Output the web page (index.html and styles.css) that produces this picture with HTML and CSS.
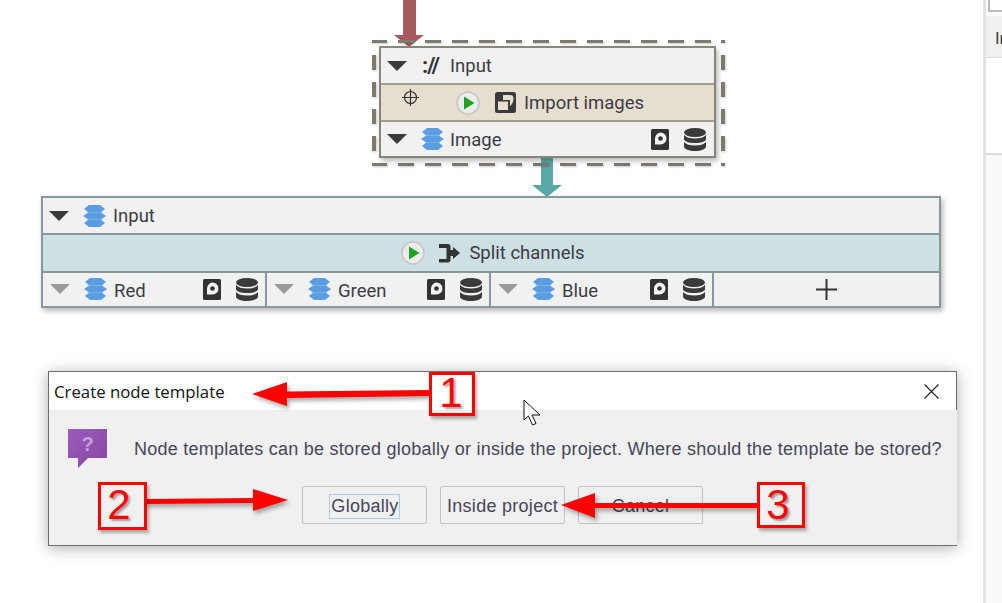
FILE: index.html
```html
<!DOCTYPE html>
<html lang="en">
<head>
<meta charset="utf-8">
<title>Create node template</title>
<link rel="stylesheet" href="styles.css">
</head>
<body>
<svg class="defs" width="0" height="0" aria-hidden="true">
  <linearGradient id="qfill" x1="0" y1="0" x2="1" y2="1"><stop offset="0" stop-color="#9b5cbd"/><stop offset="1" stop-color="#85479f"/></linearGradient>
  <symbol id="tri" viewBox="0 0 20 10"><path d="M0 0H20L10 10Z"/></symbol>
  <symbol id="layers" viewBox="0 0 23 22">
    <path fill="#5a9de0" d="M6 14H17L22 18 17 22H6L1 18Z"/>
    <path fill="#5a9de0" d="M6 7H17L23 11 17 15H6L0 11Z"/>
    <path fill="#5a9de0" d="M6 0H17L22 4 17 8H6L1 4Z"/>
    <path d="M4 7.500H19M4 14.500H19" stroke="#8dbdec" stroke-width=".6"/>
  </symbol>
  <symbol id="disk" viewBox="0 0 18 21">
    <rect width="18" height="21" rx="1.500" fill="#333"/>
    <path d="M9.500 3.500a6 6 0 1 1 0 12H4V9.500a6 6 0 0 1 5.500-6Z" fill="#f2f2f2"/>
    <circle cx="9.500" cy="9.500" r="2.300" fill="#333"/>
  </symbol>
  <symbol id="db" viewBox="0 0 22 23">
    <ellipse cx="11" cy="4.500" rx="11" ry="4.500" fill="#3a3a3a"/>
    <path fill="#3a3a3a" d="M0 7c2 2.500 6 3.500 11 3.500S20 9.500 22 7v4c0 2.500-5 4-11 4S0 13.500 0 11Z"/>
    <path fill="#3a3a3a" d="M0 14c2 2.500 6 3.500 11 3.500s9-1 11-3.500v4.500c0 2.500-5 4.500-11 4.500S0 21 0 18.500Z"/>
  </symbol>
  <symbol id="play" viewBox="0 0 24 24">
    <circle cx="12" cy="12" r="11" fill="#ececec" stroke="#c4c4c4" stroke-width="1.500"/>
    <path d="M8 5.500 18.500 12 8 18.500Z" fill="#1fa31f"/>
  </symbol>
  <symbol id="import" viewBox="0 0 21 21">
    <rect width="21" height="21" rx="2.500" fill="#3a3a3a"/>
    <path fill="#e6dfd0" d="M8 3h7c2.500 0 3.500 1 3.500 3.500 0 3.500-1.500 6-3.500 7.500V8H8Z"/>
    <rect x="3" y="9.500" width="10" height="8.500" fill="#e6dfd0"/>
  </symbol>
  <symbol id="split" viewBox="0 0 21 19">
    <path fill="#333" d="M0 0h9c1.500 0 2.500 1 2.500 2.500V6H14V3L21 9l-7 6v-3h-2.500v4c0 1.500-1 2.500-2.500 2.500H0V15h7.500V4H0Z"/>
  </symbol>
  <symbol id="target" viewBox="0 0 17 17">
    <circle cx="8.500" cy="8.500" r="6" fill="none" stroke="#333" stroke-width="1.200"/>
    <path d="M8.500 0v17M0 8.500h17" stroke="#333" stroke-width="1.200"/>
  </symbol>
</svg>

<main class="canvas">
  <div class="flow flow-in"></div>
  <div class="flow flow-out"></div>

  <div class="selection"></div>

  <section class="node node-import">
    <div class="row row-head">
      <svg class="tri"><use href="#tri"/></svg>
      <span class="proto">://</span>
      <span class="label">Input</span>
    </div>
    <div class="row row-task row-task-import">
      <svg class="target"><use href="#target"/></svg>
      <svg class="play"><use href="#play"/></svg>
      <svg class="task-icon"><use href="#import"/></svg>
      <span class="label">Import images</span>
    </div>
    <div class="row row-slot">
      <svg class="tri"><use href="#tri"/></svg>
      <svg class="layers"><use href="#layers"/></svg>
      <span class="label">Image</span>
      <svg class="disk"><use href="#disk"/></svg>
      <svg class="db"><use href="#db"/></svg>
    </div>
  </section>

  <section class="node node-split">
    <div class="row row-head">
      <svg class="tri"><use href="#tri"/></svg>
      <svg class="layers"><use href="#layers"/></svg>
      <span class="label">Input</span>
    </div>
    <div class="row row-task row-task-split">
      <svg class="play"><use href="#play"/></svg>
      <svg class="split-icon"><use href="#split"/></svg>
      <span class="label">Split channels</span>
    </div>
    <div class="row-outputs">
      <div class="output">
        <svg class="tri tri-off"><use href="#tri"/></svg>
        <svg class="layers"><use href="#layers"/></svg>
        <span class="label">Red</span>
        <svg class="disk"><use href="#disk"/></svg>
        <svg class="db"><use href="#db"/></svg>
      </div>
      <div class="output">
        <svg class="tri tri-off"><use href="#tri"/></svg>
        <svg class="layers"><use href="#layers"/></svg>
        <span class="label">Green</span>
        <svg class="disk"><use href="#disk"/></svg>
        <svg class="db"><use href="#db"/></svg>
      </div>
      <div class="output">
        <svg class="tri tri-off"><use href="#tri"/></svg>
        <svg class="layers"><use href="#layers"/></svg>
        <span class="label">Blue</span>
        <svg class="disk"><use href="#disk"/></svg>
        <svg class="db"><use href="#db"/></svg>
      </div>
      <div class="add-output">
        <svg class="plus" viewBox="0 0 21 21"><path d="M10.500 0v21M0 10.500h21" stroke="#333" stroke-width="2"/></svg>
      </div>
    </div>
  </section>

  <aside class="side">
    <div class="side-top"></div>
    <div class="side-tab"><span>In</span></div>
    <div class="side-body"></div>
  </aside>

  <section class="dialog">
    <header class="dialog-title">
      <span>Create node template</span>
      <svg class="close" viewBox="0 0 15 15"><path d="M.5.500l14 14M14.500.500l-14 14" stroke="#222" stroke-width="1.100"/></svg>
    </header>
    <div class="dialog-body">
      <div class="question">
        <svg class="q-icon" viewBox="0 0 39 39"><path fill="url(#qfill)" d="M0 0H39V29H20L10 39V29H0Z"/></svg>
        <span class="q-mark">?</span>
      </div>
      <p class="message">Node templates can be stored globally or inside the project. Where should the template be stored?</p>
      <div class="buttons">
        <button class="btn"><span class="focus">Globally</span></button>
        <button class="btn">Inside project</button>
        <button class="btn">Cancel</button>
      </div>
    </div>
  </section>

  <svg class="notes" viewBox="0 0 1002 603">
    <path fill="#f00" d="M252 394 287 382V391.500L431 390V396L287 398V406Z"/>
    <path fill="#f00" d="M145 499 253 498V489L288 500 253 511V503L145 504Z"/>
    <path fill="#f00" d="M561 505 595 493V503H757V508H595V518Z"/>
  </svg>
  <div class="tag tag-1">1</div>
  <div class="tag tag-2">2</div>
  <div class="tag tag-3">3</div>

  <svg class="cursor" viewBox="0 0 18 27"><path d="M1 1V21L5.500 17 9.500 26 13 24.500 9 16H17Z" fill="#fff" stroke="#111" stroke-width="1"/></svg>
</main>
</body>
</html>
```

FILE: styles.css
```css
* { box-sizing: border-box; }
html, body { margin: 0; padding: 0; background: #fff; }
body { width: 1002px; height: 603px; overflow: hidden; }
.defs { position: absolute; }

.canvas { position: relative; width: 1002px; height: 603px; overflow: hidden; font-family: Roboto, "Liberation Sans", sans-serif; color: #3c3c46; }
svg { display: block; flex: none; }

/* connectors */
.flow { position: absolute; width: 0; }
.flow::before { content: ""; position: absolute; }
.flow::after { content: ""; position: absolute; width: 0; height: 0; border-style: solid; border-color: transparent; border-width: 12px 15.500px 0; }
.flow-in { left: 409px; top: 0; }
.flow-in::before { left: -6.500px; top: 0; width: 13px; height: 36px; background: #a85b5f; }
.flow-in::after { left: -15.500px; top: 35px; border-top-color: #a85b5f; }
.flow-out { left: 547px; top: 157px; }
.flow-out::before { left: -6px; top: 0; width: 12px; height: 29px; background: #5ba8a9; }
.flow-out::after { left: -15.500px; top: 28px; border-top-color: #5ba8a9; }

.selection { position: absolute; left: 372px; top: 40px; width: 353px; height: 126px; background:
  repeating-linear-gradient(90deg, #7f7a6e 0 15px, transparent 15px 26px, #7f7a6e 26px 27px) 0 0 / 100% 3px no-repeat,
  repeating-linear-gradient(90deg, #7f7a6e 0 15px, transparent 15px 26px, #7f7a6e 26px 27px) 0 100% / 100% 3px no-repeat,
  repeating-linear-gradient(180deg, #7f7a6e 0 3px, transparent 3px 15px, #7f7a6e 15px 27px) 0 0 / 4px 100% no-repeat,
  repeating-linear-gradient(180deg, #7f7a6e 0 3px, transparent 3px 15px, #7f7a6e 15px 27px) 100% 0 / 4px 100% no-repeat; filter: drop-shadow(1px 1px 1px rgba(0,0,0,.2)); }

/* nodes */
.node { position: absolute; display: flex; flex-direction: column; background: #f1f1f1; box-shadow: 2px 3px 5px rgba(0,0,0,.28); font-size: 18.500px; }
.node-import { left: 379px; top: 46px; width: 337px; height: 112px; border: 2px solid #87867c; }
.node-split { left: 41px; top: 196px; width: 900px; height: 112px; border: 2px solid #87979b; }
.row { display: flex; align-items: center; flex: none; }
.row-head { height: 35px; padding-left: 6px; }
.label { white-space: nowrap; line-height: 20px; }
.tri { width: 20px; height: 10px; fill: #3a3a3a; }
.tri-off { fill: #9a9a9a; }
.proto { margin-left: 15px; width: 28px; font: 700 22px/20px Roboto, "Liberation Sans", sans-serif; color: #333; letter-spacing: -1px; }
.row-task { height: 39px; border-top: 2px solid #a19c8e; border-bottom: 2px solid #a19c8e; }
.row-task-import { background: #e6dfd0; padding-left: 21px; }
.target { width: 17px; height: 17px; margin-top: -10px; }
.play { width: 24px; height: 24px; }
.row-task-import .play { margin-left: 37px; }
.task-icon { width: 21px; height: 21px; margin-left: 15px; margin-right: 8px; }
.row-slot { height: 35px; padding: 1px 8px 0 6px; margin-top: -1px; }
.row-slot .label { margin-top: 1px; }
.layers { width: 23px; height: 22px; margin-left: 14px; margin-right: 6px; }
.node-split .layers { margin-right: 7px; }
.row-slot .disk { margin-left: auto; }
.disk { width: 18px; height: 21px; }
.db { width: 22px; height: 23px; margin-left: 15px; }

.row-task-split { background: #cde0e4; border-color: #87979b; justify-content: center; height: 40px; padding-left: 4px; }
.split-icon { width: 21px; height: 19px; margin-left: 14px; margin-right: 9px; }
.row-outputs { display: grid; grid-template-columns: 224px 224px 223px 1fr; height: 35px; margin-top: -1px; }
.output { display: flex; align-items: center; padding: 0 7px 0 7px; border-right: 2px solid #87979b; }
.output .label { margin-top: 3px; }
.output .disk { margin-left: auto; }
.add-output { display: flex; align-items: center; justify-content: center; }
.plus { width: 21px; height: 21px; }

/* side panel */
.side { position: absolute; left: 983px; top: 0; width: 19px; height: 603px; border-left: 3px solid #e2e2e2; display: flex; flex-direction: column; background: #fafafa; }
.side-top { height: 12px; background: #fff; border: 1px solid #bbb; border-width: 0 0 2px 2px; margin-left: 2px; }
.side-tab { height: 42px; margin-top: 4px; padding-left: 9px; background: #f0f0f0; border-bottom: 1px solid #ddd; font-size: 17px; line-height: 44px; overflow: hidden; white-space: nowrap; }
.side-body { height: 97px; background: #fff; border-bottom: 2px solid #dcdcdc; }

/* dialog */
.dialog { position: absolute; left: 48px; top: 371px; width: 909px; height: 175px; border: 1px solid #6e6e6e; border-right: 0; background: #f0f0f0; box-shadow: 0 2px 14px rgba(0,0,0,.32); display: flex; flex-direction: column; }
.dialog-title { height: 38px; background: #fff; flex: none; display: flex; align-items: center; justify-content: space-between; padding: 2px 17px 0 5px; border-right: 1px solid #6e6e6e; font: 16.800px/22px "Open Sans", "Noto Sans", sans-serif; color: #111; }
.close { width: 15px; height: 15px; margin-top: -2px; }
.dialog-body { flex: 1; display: grid; grid-template-columns: 66px 1fr; grid-template-rows: 57px 1fr; padding: 19px 0 0 19px; }
.question { position: relative; width: 39px; height: 39px; }
.q-icon { width: 39px; height: 39px; }
.q-mark { position: absolute; left: 0; top: 3px; width: 39px; text-align: center; font: 700 20px/24px "Liberation Sans", sans-serif; color: #c6a2de; }
.message { margin: 10px 0 0; font: 18px/20px "Liberation Sans", sans-serif; letter-spacing: .25px; color: #46465a; white-space: nowrap; }
.buttons { grid-column: 1 / 3; display: flex; gap: 13px; padding-left: 234px; align-items: flex-start; }
.btn { width: 125px; height: 38px; padding: 2px 0 0; border: 1px solid #c2c2c2; border-radius: 2px; background: #f0f0f0; font: 18px/20px "Liberation Sans", sans-serif; letter-spacing: .28px; color: #46465a; display: flex; align-items: center; justify-content: center; }
.focus { display: block; height: 25px; padding: 1px 0 0 1px; line-height: 21px; border: 1px solid #a4cdf0; }

/* annotations */
.notes { position: absolute; inset: 0; width: 1002px; height: 603px; filter: drop-shadow(2px 3px 2px rgba(0,0,0,.35)); }
.tag { position: absolute; border: 3px solid #f00; color: #f00; font: 42px/40px "Liberation Sans", sans-serif; text-align: center; text-shadow: 2px 2px 2px rgba(0,0,0,.35); box-shadow: 2px 3px 3px rgba(0,0,0,.3); }
.tag-1 { left: 429px; top: 372px; width: 46px; height: 44px; line-height: 36px; padding-right: 2px; background: linear-gradient(#fff 0 35px, #f0f0f0 35px); }
.tag-2 { left: 98px; top: 482px; width: 49px; height: 48px; padding-right: 7px; background: #f0f0f0; }
.tag-3 { left: 757px; top: 482px; width: 48px; height: 46px; padding-right: 6px; background: #f0f0f0; }
.cursor { position: absolute; left: 523px; top: 399px; width: 18px; height: 27px; }
```
